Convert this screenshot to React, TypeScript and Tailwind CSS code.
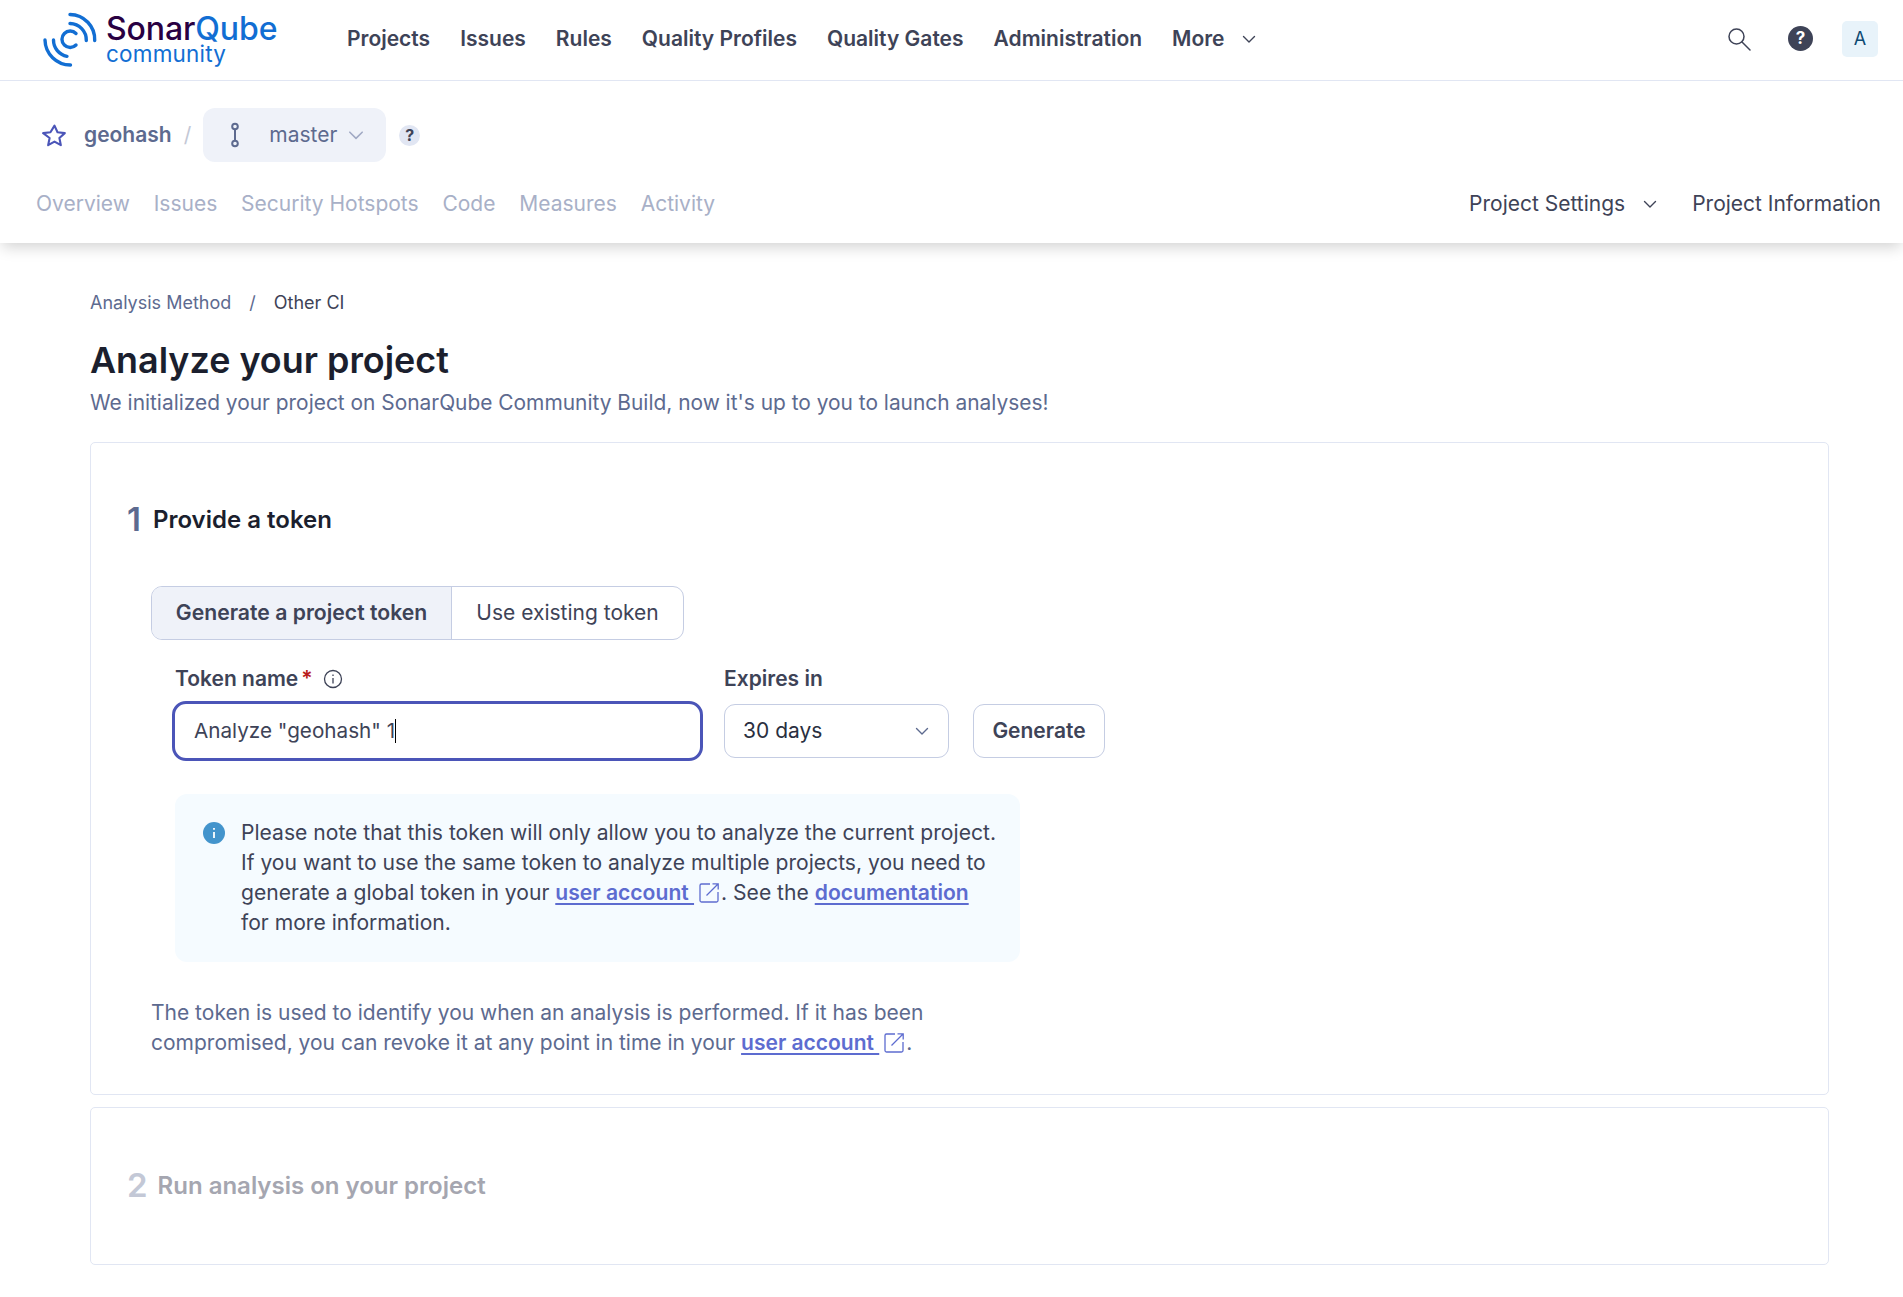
const Chevron = ({ className = "" }: { className?: string }) => (
  <svg viewBox="0 0 16 16" className={className} fill="none" stroke="currentColor" strokeWidth="1.4" strokeLinecap="round" strokeLinejoin="round">
    <path d="M2.5 5.5 8 11l5.5-5.5" />
  </svg>
);

const ExternalLink = () => (
  <svg viewBox="0 0 22 22" className="inline-block w-[22px] h-[22px] ml-[4px] mr-[1px] -mt-[3px] align-middle text-[#5d6cd0]" fill="none" stroke="currentColor" strokeWidth="1.3">
    <path d="M12 2H3.500A1.500 1.500 0 0 0 2 3.500v15A1.500 1.500 0 0 0 3.500 20h15a1.500 1.500 0 0 0 1.500-1.500V10" />
    <path d="M8.500 13.500 20 2M14.500 1.800h5.700v5.700" />
  </svg>
);

const Link = ({ children }: { children: string }) => (
  <a className="font-semibold text-[#5d6cd0] underline underline-offset-[3px] decoration-[2px]">{children}</a>
);

function Logo() {
  return (
    <div className="mt-[3px] flex w-[305px] items-center gap-[8px]">
      <svg viewBox="42 10 56 58" className="w-[56px] h-[58px] text-[#126ed3]" fill="none" stroke="currentColor" strokeWidth="3.400" strokeLinecap="round">
        <path d="M76 32.500A8.200 8.200 0 1 0 76 44" />
        <path d="M70 22.500A16.500 16.500 0 0 1 86.300 39.500" />
        <path d="M70 13.500A25 25 0 0 1 94.700 39.500" />
        <path d="M53.500 39A16.500 16.500 0 0 0 67 55.300" />
        <path d="M45 39A25.500 25.500 0 0 0 70.500 64" />
      </svg>
      <div className="flex flex-col -mt-[2px]">
        <span className="text-[32px] leading-[30px] font-medium text-[#290042] tracking-[-0.1px]">
          Sonar<span className="text-[#126ed3]">Qube</span>
        </span>
        <span className="text-[22.500px] leading-[20px] text-[#126ed3] tracking-[0.2px]">community</span>
      </div>
    </div>
  );
}

function TopBar() {
  const items = ["Projects", "Issues", "Rules", "Quality Profiles", "Quality Gates", "Administration"];
  return (
    <div className="relative z-10 flex h-[81px] items-center border-b border-[#e1e6f3] bg-white pb-[3px] pl-[42px] pr-[25px]">
      <Logo />
      <nav className="flex items-center gap-[30px] text-[21px] font-semibold text-[#3e4357]">
        {items.map((item) => (
          <a key={item}>{item}</a>
        ))}
        <a className="flex items-center gap-[16px]">
          More
          <Chevron className="w-[16px] h-[16px]" />
        </a>
      </nav>
      <div className="ml-auto flex items-center text-[#3e4357]">
        <svg viewBox="0 0 24 24" className="w-[24px] h-[24px] mr-[37px]" fill="none" stroke="currentColor" strokeWidth="1.500" strokeLinecap="round">
          <circle cx="9.500" cy="9.500" r="7.500" />
          <path d="m15 15 8 8" />
        </svg>
        <div className="flex w-[25px] h-[25px] mr-[29px] items-center justify-center rounded-full bg-[#3e4357] text-white text-[17px] font-bold">?</div>
        <div className="flex w-[36px] h-[36px] items-center justify-center rounded-[5px] bg-[#e8f3fa] text-[#0e4a72] text-[18px]">A</div>
      </div>
    </div>
  );
}

function ProjectBar() {
  const tabs = ["Overview", "Issues", "Security Hotspots", "Code", "Measures", "Activity"];
  return (
    <div className="relative bg-white pt-[27px] pb-[24px] shadow-[0_6px_14px_-2px_rgba(0,0,0,0.18)]">
      <div className="flex h-[54px] items-center pl-[42px]">
        <svg viewBox="0 0 24 24" className="w-[25px] h-[25px] text-[#4b55b8]" fill="none" stroke="currentColor" strokeWidth="2" strokeLinejoin="round">
          <path d="m12 2.500 2.900 6.400 7 .8-5.200 4.700 1.400 6.900-6.100-3.500-6.100 3.500 1.400-6.900L1.100 9.700l7-.8z" />
        </svg>
        <span className="ml-[17px] text-[21px] font-semibold text-[#5d6a8f]">geohash</span>
        <span className="ml-[12px] text-[21px] text-[#c3c8d6]">/</span>
        <div className="ml-[12px] flex h-[54px] w-[183px] items-center rounded-[12px] bg-[#eff2f9] pl-[23px] text-[#5d6a8f]">
          <svg viewBox="0 0 18 26" className="w-[18px] h-[26px]" fill="none" stroke="currentColor" strokeWidth="2">
            <circle cx="9" cy="4.500" r="2.800" />
            <circle cx="9" cy="21.500" r="2.800" />
            <path d="M9 7.300v11.400" />
          </svg>
          <span className="ml-[25px] text-[21px]">master</span>
          <Chevron className="ml-[10px] w-[18px] h-[18px] text-[#a0a9c4]" />
        </div>
        <div className="ml-[13px] flex h-[21px] w-[21px] items-center justify-center rounded-full bg-[#e1e6f3] text-[16px] font-bold text-[#3e4357]">?</div>
      </div>
      <div className="mt-[27px] flex h-[30px] items-center pl-[36px] pr-[22px] text-[21px]">
        <div className="flex gap-[23.800px] text-[#a8b0c7]">
          {tabs.map((tab) => (
            <a key={tab}>{tab}</a>
          ))}
        </div>
        <div className="ml-auto flex items-center text-[#3e4357]">
          <a>Project Settings</a>
          <Chevron className="ml-[17px] w-[16px] h-[16px]" />
          <a className="ml-[34px]">Project Information</a>
        </div>
      </div>
    </div>
  );
}

function TokenForm() {
  return (
    <div className="pl-[24px]">
      <div className="flex items-start gap-[24px] mt-[24px]">
        <div className="w-[525px]">
          <div className="flex h-[30px] items-center text-[21px] font-semibold text-[#3e4357]">
            Token name<span className="ml-[3px] text-[#b81a1a]">*</span>
            <svg viewBox="0 0 20 20" className="ml-[10px] w-[20px] h-[20px]" fill="none" stroke="currentColor" strokeWidth="1.300">
              <circle cx="10" cy="10" r="8.500" />
              <path d="M10 9v5.500M10 5.500v1.500" />
            </svg>
          </div>
          <div className="mt-[10px] flex h-[54px] items-center rounded-[11px] outline-[3px] outline-[#4b55b8] bg-white pl-[19px] text-[20.700px] text-[#3e4357]">
            Analyze "geohash" 1<span className="inline-block w-px h-[24px] bg-black" />
          </div>
        </div>
        <div>
          <div className="flex h-[30px] items-center text-[21px] font-semibold text-[#3e4357]">Expires in</div>
          <div className="mt-[10px] flex gap-[24px]">
            <div className="flex h-[54px] w-[225px] items-center justify-between rounded-[11px] border border-[#c5cde3] pl-[18px] pr-[18px] text-[21px] text-[#2a2f40]">
              30 days
              <Chevron className="w-[16px] h-[16px] text-[#5d6a8f]" />
            </div>
            <button className="h-[54px] w-[132px] rounded-[11px] border border-[#c5cde3] text-[21px] font-semibold text-[#3e4357]">Generate</button>
          </div>
        </div>
      </div>
      <div className="mt-[36px] flex w-[845px] gap-[16px] rounded-[12px] bg-[#f5fbff] pl-[28px] pr-[20px] py-[24px] text-[21.100px] leading-[30px] text-[#3e4357]">
        <svg viewBox="0 0 22 22" className="mt-[4px] w-[22px] h-[22px] shrink-0">
          <circle cx="11" cy="11" r="11" fill="#4394cc" />
          <path d="M11 10v6M11 6v1.800" stroke="white" strokeWidth="1.800" />
        </svg>
        <p>
          Please note that this token will only allow you to analyze the current project.
          <br />
          If you want to use the same token to analyze multiple projects, you need to
          <br />
          generate a global token in your <Link>user account </Link>
          <ExternalLink />. See the <Link>documentation</Link>
          <br />
          for more information.
        </p>
      </div>
    </div>
  );
}

export default function App() {
  return (
    <div className="min-h-[1297px] bg-white font-['Inter',sans-serif]">
      <TopBar />
      <ProjectBar />
      <main className="pl-[90px] pr-[74px] pt-[47px]">
        <div className="flex h-[24px] items-center text-[18px] text-[#5d6a8f]">
          Analysis Method<span className="mx-[18px]">/</span><span className="text-[#3e4357]">Other CI</span>
        </div>
        <h1 className="mt-[24px] text-[35.900px] leading-[44px] font-semibold text-[#1b1f2e]">Analyze your project</h1>
        <p className="mt-[6px] text-[20.900px] leading-[30px] text-[#5d6a8f]">We initialized your project on SonarQube Community Build, now it's up to you to launch analyses!</p>

        <section className="mt-[24px] rounded-[5px] border border-[#e1e6f3] px-[36px] pt-[60px] pb-[36px]">
          <div className="flex h-[34px] items-center">
            <span className="text-[33px] font-semibold text-[#5d6a8f]">1</span>
            <h2 className="ml-[12px] text-[24px] font-semibold text-[#1b1f2e]">Provide a token</h2>
          </div>
          <div className="ml-[24px] mt-[49px]">
            <div className="flex h-[54px] w-[533px] overflow-hidden rounded-[11px] border border-[#c5cde3] text-[21px]">
              <div className="flex w-[300px] items-center justify-center border-r border-[#c5cde3] bg-[#eff2f9] text-[21.200px] font-semibold text-[#3e4357]">Generate a project token</div>
              <div className="flex flex-1 items-center justify-center text-[#3e4357]">Use existing token</div>
            </div>
            <TokenForm />
            <p className="mt-[36px] w-[820px] text-[21px] leading-[30px] text-[#5d6a8f]">
              The token is used to identify you when an analysis is performed. If it has been
              <br />
              compromised, you can revoke it at any point in time in your <Link>user account </Link>
              <ExternalLink />.
            </p>
          </div>
        </section>

        <section className="mt-[12px] flex h-[158px] items-center rounded-[5px] border border-[#e1e6f3] pl-[36px]">
          <span className="text-[33px] font-semibold text-[#c3c8d6]">2</span>
          <h2 className="ml-[10px] text-[24px] font-semibold text-[#a5a6b0]">Run analysis on your project</h2>
        </section>
      </main>
    </div>
  );
}
